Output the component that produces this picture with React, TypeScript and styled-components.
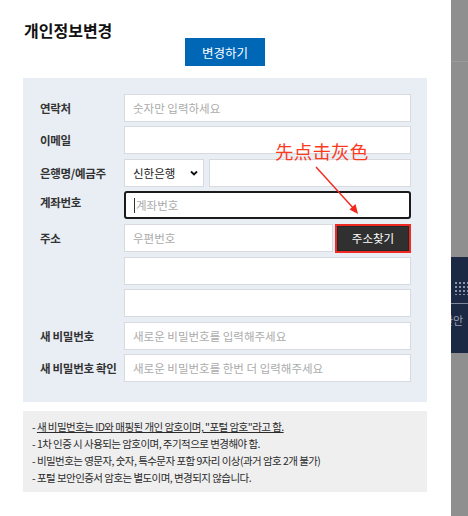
import React from "react";
import styled, { createGlobalStyle } from "styled-components";

const GlobalStyle = createGlobalStyle`
  html, body {
    margin: 0;
    padding: 0;
    background: #ffffff;
  }
  body {
    font-family: "Noto Sans CJK KR", "Noto Sans", sans-serif;
    color: #222;
  }
  * {
    box-sizing: border-box;
  }
`;

const Page = styled.div`
  display: flex;
  width: 468px;
  height: 516px;
  overflow: hidden;
`;

const Modal = styled.div`
  width: 451px;
  flex: none;
  padding: 22px 24px 0 23px;
  display: flex;
  flex-direction: column;
  background: #fff;
`;

const Title = styled.h2`
  margin: 0 0 0 1px;
  font-size: 16px;
  line-height: 16px;
  font-weight: 700;
  color: #111;
`;

const SubmitButton = styled.button`
  align-self: center;
  width: 80px;
  height: 28px;
  margin: 0 0 12px;
  border: 0;
  background: #0067b6;
  color: #fff;
  font-family: inherit;
  font-size: 12.5px;
`;

const Panel = styled.div`
  position: relative;
  background: #e9eef5;
  padding: 16px 16px 20px 17px;
  display: grid;
  grid-template-columns: 84px 1fr;
  row-gap: 4.4px;
`;

const Label = styled.div<{ $top?: boolean }>`
  display: flex;
  align-items: ${(p) => (p.$top ? "flex-start" : "center")};
  padding-top: ${(p) => (p.$top ? "3px" : "0")};
  height: 28px;
  font-size: 11.5px;
  font-weight: 700;
  color: #333;
  letter-spacing: -0.3px;
`;

const Field = styled.input`
  width: 100%;
  height: 28px;
  border: 1px solid #d7dbe0;
  background: #fff;
  padding: 0 8px;
  font-family: inherit;
  font-size: 11.5px;
  outline: none;
  &::placeholder {
    color: #ababab;
  }
`;

const Split = styled.div<{ $cols: string; $gap: number }>`
  display: grid;
  grid-template-columns: ${(p) => p.$cols};
  column-gap: ${(p) => p.$gap}px;
`;

const SelectBox = styled.div`
  height: 28px;
  border: 1px solid #d7dbe0;
  background: #fff;
  display: flex;
  align-items: center;
  justify-content: space-between;
  padding: 0 4px 0 8px;
  font-size: 11.5px;
  color: #222;
`;

const FocusBox = styled.div`
  height: 28px;
  border: 2px solid #1a1a1a;
  border-radius: 3px;
  background: #fff;
  display: flex;
  align-items: center;
  padding-left: 8px;
`;

const Caret = styled.span`
  width: 1px;
  height: 15px;
  background: #333;
  flex: none;
`;

const BareInput = styled.input`
  border: 0;
  outline: none;
  flex: 1;
  min-width: 0;
  height: 100%;
  padding: 0 0 0 1px;
  font-family: inherit;
  font-size: 11.5px;
  background: transparent;
  &::placeholder {
    color: #ababab;
  }
`;

const SearchButton = styled.button`
  height: 29px;
  border: 2px solid #ef2a22;
  box-shadow: inset 0 0 0 1px #262626;
  background: #303030;
  color: #fff;
  font-family: inherit;
  font-size: 11.5px;
  padding: 0;
`;

const Note = styled.div`
  position: absolute;
  left: 252px;
  top: 62px;
  font-family: "Noto Sans CJK SC", sans-serif;
  font-size: 18.5px;
  line-height: 22px;
  color: #fb3a1e;
  letter-spacing: 0.2px;
  pointer-events: none;
`;

const Arrow = styled.svg`
  position: absolute;
  left: 288px;
  top: 86px;
  overflow: visible;
  pointer-events: none;
`;

const Notice = styled.div`
  margin-top: 9px;
  background: #efefef;
  padding: 7px 9px 6px;
  font-size: 10.5px;
  line-height: 17px;
  color: #2b2b2b;
  letter-spacing: -0.55px;
`;

const NoticeLine = styled.div`
  white-space: nowrap;
`;

const Under = styled.span`
  text-decoration: underline;
`;

const Side = styled.div`
  flex: 1;
  background: #8f8f8f;
  display: flex;
  flex-direction: column;
  overflow: hidden;
`;

const SideTop = styled.div`
  height: 62px;
  border-bottom: 1px solid #9b9b9b;
  flex: none;
`;

const SideGap = styled.div<{ $h: number }>`
  height: ${(p) => p.$h}px;
  flex: none;
`;

const SideBanner = styled.div`
  height: 96px;
  background: #1b2944;
  flex: none;
  display: flex;
  flex-direction: column;
  padding-top: 24px;
  overflow: hidden;
`;

const Dots = styled.div`
  margin-left: 3px;
  width: 14px;
  height: 14px;
  background-image: radial-gradient(circle, #8a93a6 45%, transparent 50%);
  background-size: 4px 4px;
`;

const BannerRule = styled.div`
  margin-top: 8px;
  height: 1px;
  background: #7d8798;
`;

const BannerText = styled.div`
  margin-top: 8px;
  margin-left: -8px;
  font-size: 11px;
  color: #9aa2b0;
  white-space: nowrap;
`;

const Chevron = () => (
  <svg width="10" height="10" viewBox="0 0 10 10">
    <path d="M2 3.5 L5 6.5 L8 3.5" fill="none" stroke="#111" strokeWidth="1.8" />
  </svg>
);

export default function App() {
  return (
    <>
      <GlobalStyle />
      <Page>
        <Modal>
          <Title>개인정보변경</Title>
          <SubmitButton>변경하기</SubmitButton>
          <Panel>
            <Label>연락처</Label>
            <Field placeholder="숫자만 입력하세요" />

            <Label>이메일</Label>
            <Field />

            <Label>은행명/예금주</Label>
            <Split $cols="80px 1fr" $gap={5}>
              <SelectBox>
                <span>신한은행</span>
                <Chevron />
              </SelectBox>
              <Field />
            </Split>

            <Label $top>계좌번호</Label>
            <FocusBox>
              <Caret />
              <BareInput placeholder="계좌번호" />
            </FocusBox>

            <Label>주소</Label>
            <Split $cols="1fr 76px" $gap={2}>
              <Field placeholder="우편번호" />
              <SearchButton>주소찾기</SearchButton>
            </Split>

            <Label />
            <Field />

            <Label />
            <Field />

            <Label>새 비밀번호</Label>
            <Field placeholder="새로운 비밀번호를 입력해주세요" />

            <Label>새 비밀번호 확인</Label>
            <Field placeholder="새로운 비밀번호를 한번 더 입력해주세요" />

            <Note>先点击灰色</Note>
            <Arrow width="50" height="52" viewBox="0 0 50 52">
              <line x1="5" y1="3" x2="44" y2="46" stroke="#f5261c" strokeWidth="1.4" />
              <path d="M47 50 L38.5 45.5 L44.5 40 Z" fill="#f5261c" />
            </Arrow>
          </Panel>
          <Notice>
            <NoticeLine>
              - <Under>새 비밀번호는 ID와 매핑된 개인 암호이며, "포털 암호"라고 함.</Under>
            </NoticeLine>
            <NoticeLine>- 1차 인증 시 사용되는 암호이며, 주기적으로 변경해야 함.</NoticeLine>
            <NoticeLine>- 비밀번호는 영문자, 숫자, 특수문자 포함 9자리 이상(과거 암호 2개 불가)</NoticeLine>
            <NoticeLine>- 포털 보안인증서 암호는 별도이며, 변경되지 않습니다.</NoticeLine>
          </Notice>
        </Modal>
        <Side>
          <SideTop />
          <SideGap $h={195} />
          <SideBanner>
            <Dots />
            <BannerRule />
            <BannerText>관안</BannerText>
          </SideBanner>
        </Side>
      </Page>
    </>
  );
}
